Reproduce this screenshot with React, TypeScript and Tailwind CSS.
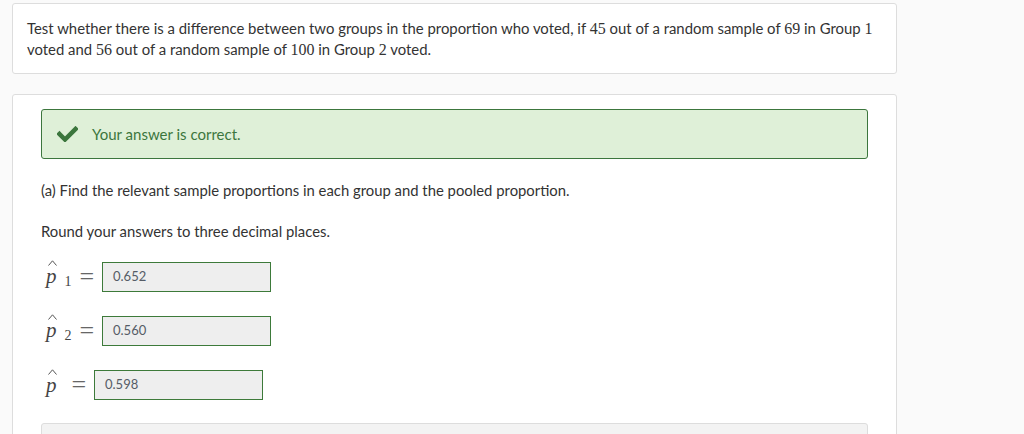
import React from 'react';

const serif = { fontFamily: '"Liberation Serif", "Times New Roman", serif' };

function Num({ children }: { children: React.ReactNode }) {
  return (
    <span className="text-[16px]" style={serif}>
      {children}
    </span>
  );
}

function PHat({ sub }: { sub?: string }) {
  return (
    <span className="inline-flex items-baseline text-[#444]" style={serif}>
      <span className="relative text-[21px] leading-none" style={{ fontStyle: 'italic' }}>
        p
        <svg width="9" height="6" viewBox="0 0 9 6" className="absolute left-[2px] top-[-6px]">
          <path d="M0.5 5.5 L4.5 0.8 L8.5 5.5" stroke="#555" strokeWidth="1" fill="none" />
        </svg>
      </span>
      {sub ? <span className="ml-[8px] text-[14px] relative top-[3px]">{sub}</span> : null}
    </span>
  );
}

function AnswerRow({ sub, value }: { sub?: string; value: string }) {
  return (
    <div className="flex items-center h-[30px]">
      <div className={`flex items-center ${sub ? 'w-[61px]' : 'w-[53px]'} pl-[5px]`}>
        <PHat sub={sub} />
        <span className={`${sub ? 'ml-[8px]' : 'ml-[15px]'} text-[26px] leading-none text-[#666]`} style={serif}>=</span>
      </div>
      <div className="w-[169px] h-[30px] border border-[#3d7a3a] bg-[#eeeeee] flex items-center pl-[10px] text-[13px] text-[#555c66]">
        {value}
      </div>
    </div>
  );
}

export default function App() {
  return (
    <div
      className="w-[1024px] h-[434px] overflow-hidden bg-[#fafafa] pl-[12px] pt-[3px]"
      style={{ fontFamily: 'Lato, "Open Sans", sans-serif' }}
    >
      <div className="w-[885px] bg-white border border-[#dddddd] rounded-[3px] px-[14px] pt-[14px] pb-[13px] text-[14.9px] leading-[20px] text-[#333]">
        <p>
          Test whether there is a difference between two groups in the proportion who voted, if <Num>45</Num> out of a
          random sample of <Num>69</Num> in Group <Num>1</Num> voted and <Num>56</Num> out of a random sample of{' '}
          <Num>100</Num> in Group <Num>2</Num> voted.
        </p>
      </div>

      <div className="mt-[20px] w-[885px] h-[400px] bg-white border border-[#dddddd] rounded-t-[3px] pl-[28px] pr-[28px] pt-[14px] text-[14.85px] text-[#333]">
        <div className="h-[50px] bg-[#dff0d8] border border-[#3c763d] rounded-[3px] flex items-center pl-[15px]">
          <svg width="21" height="16" viewBox="0 0 21 16" className="mr-[14px]">
            <path d="M2.5 8 L8 13.5 L18.5 3" stroke="#3c763d" strokeWidth="4.5" fill="none" strokeLinecap="square" />
          </svg>
          <span className="text-[#3c763d] text-[15px]">Your answer is correct.</span>
        </div>

        <p className="mt-[21px] leading-[20px]">(a) Find the relevant sample proportions in each group and the pooled proportion.</p>
        <p className="mt-[21px] leading-[20px]">Round your answers to three decimal places.</p>

        <div className="mt-[21px] flex flex-col gap-[24px]">
          <AnswerRow sub="1" value="0.652" />
          <AnswerRow sub="2" value="0.560" />
          <AnswerRow value="0.598" />
        </div>

        <div className="mt-[23px] h-[40px] bg-[#f3f3f3] border border-[#dddddd] rounded-[3px]" />
      </div>
    </div>
  );
}
